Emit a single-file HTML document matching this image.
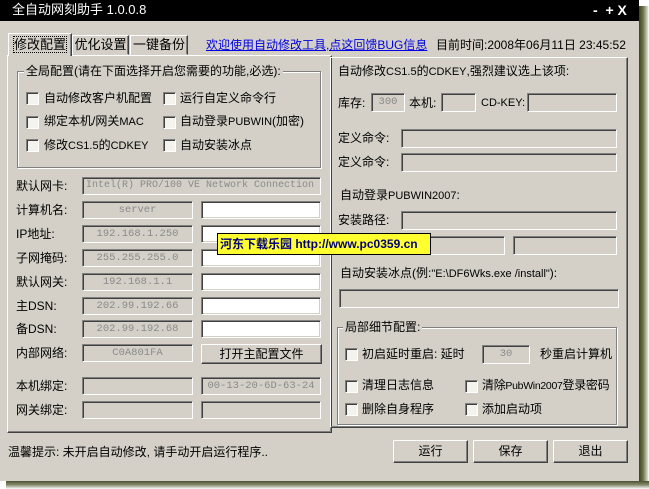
<!DOCTYPE html><html><head><meta charset="utf-8"><style>
*{margin:0;padding:0;box-sizing:border-box}
body{width:649px;height:489px;background:#fff;position:relative;overflow:hidden;font-family:"Liberation Sans","Noto Sans CJK SC",sans-serif;font-size:12px;color:#000}
.a{position:absolute;white-space:nowrap;line-height:16px}
.win{position:absolute;left:0;top:0;width:639px;height:481px;background:#d4d0c8}
.shr{position:absolute;left:639px;top:6px;width:10px;height:483px;background:linear-gradient(90deg,#3c4420,#6c7248 40%,#c8c8b8 80%,#fff)}
.shb{position:absolute;left:6px;top:481px;width:643px;height:8px;background:linear-gradient(180deg,#4c5230,#8a8e70 50%,#fff)}
.tb{position:absolute;left:0;top:0;width:639px;height:21px;background:#000;color:#fff}
.f{position:absolute;overflow:hidden;white-space:nowrap;border-top:1px solid #808080;border-left:1px solid #808080;border-right:1px solid #fff;border-bottom:1px solid #fff;box-shadow:inset 1px 1px 0 #404040,inset -1px -1px 0 #d4d0c8;background:#d4d0c8;color:#8a8a8a;text-align:center;line-height:16px;font-family:"Liberation Mono","Noto Sans CJK SC",monospace;font-size:10.5px}
.w{background:#fff}
.cb{position:absolute;width:13px;height:13px;border-top:1px solid #808080;border-left:1px solid #808080;border-right:1px solid #fff;border-bottom:1px solid #fff;box-shadow:inset 1px 1px 0 #404040;background:#f4f3ee}
.g{position:absolute;border:1px solid #808080;box-shadow:1px 1px 0 #fff,inset 1px 1px 0 #fff}
.btn{position:absolute;border:1px solid;border-color:#fff #404040 #404040 #fff;box-shadow:inset -1px -1px 0 #808080;text-align:center;background:#d4d0c8}
.lg{background:#d4d0c8;padding:0 2px}
.tab{position:absolute;border:1px solid;border-color:#fff #404040 transparent #fff;box-shadow:inset -1px 0 0 #808080;text-align:center;line-height:18px;font-size:13px}
.n{font-size:11px}
</style></head><body>
<div class="shr"></div><div class="shb"></div>
<div class="win"></div>
<div class="tb"><div class="a" style="left:12px;top:2px;font-size:13px">全自动网刻助手 1.0.0.8</div>
<div class="a" style="left:593px;top:2px;font-weight:bold;font-size:14px">-&nbsp; + X</div></div>

<div class="tab" style="left:72px;top:35px;width:57px;height:20px">优化设置</div>
<div class="tab" style="left:130px;top:35px;width:58px;height:20px">一键备份</div>
<div class="tab" style="left:8px;top:33px;width:64px;height:23px;background:#d4d0c8;z-index:2;border-bottom:none;line-height:21px"><span style="outline:1px dotted #000">修改配置</span></div>
<div class="a" style="left:206px;top:37px;color:#0000e0;text-decoration:underline">欢迎使用自动修改工具,点这回馈BUG信息</div>
<div class="a" style="left:436px;top:37px">目前时间:2008年06月11日 23:45:52</div>

<div class="g" style="left:7px;top:55px;width:325px;height:378px;border-color:#fff #404040 #404040 #fff;box-shadow:inset -1px -1px 0 #808080"></div>
<div class="g" style="left:17px;top:71px;width:304px;height:97px"></div>
<div class="a lg" style="left:24px;top:63px">全局配置(请在下面选择开启您需要的功能,必选):</div>
<div class="cb" style="left:26px;top:92px"></div><div class="a" style="left:44px;top:90px">自动修改客户机配置</div>
<div class="cb" style="left:163px;top:92px"></div><div class="a" style="left:180px;top:90px">运行自定义命令行</div>
<div class="cb" style="left:26px;top:116px"></div><div class="a" style="left:44px;top:113px">绑定本机/网关<span class="n">MAC</span></div>
<div class="cb" style="left:163px;top:116px"></div><div class="a" style="left:180px;top:113px">自动登录<span class="n">PUBWIN</span>(加密)</div>
<div class="cb" style="left:26px;top:139px"></div><div class="a" style="left:44px;top:137px">修改<span class="n">CS1.5</span>的<span class="n">CDKEY</span></div>
<div class="cb" style="left:163px;top:139px"></div><div class="a" style="left:180px;top:137px">自动安装冰点</div>

<div class="a" style="left:16px;top:178px">默认网卡:</div><div class="f" style="left:82px;top:177px;width:239px;height:18px;text-align:left;padding-left:3px;font-size:10px">Intel(R) PRO/100 VE Network Connection</div>
<div class="a" style="left:16px;top:202px">计算机名:</div><div class="f" style="left:82px;top:201px;width:111px;height:18px">server</div><div class="f w" style="left:201px;top:201px;width:120px;height:18px"></div>
<div class="a" style="left:16px;top:226px">IP地址:</div><div class="f" style="left:82px;top:225px;width:111px;height:18px">192.168.1.250</div><div class="f w" style="left:201px;top:225px;width:120px;height:18px"></div>
<div class="a" style="left:16px;top:250px">子网掩码:</div><div class="f" style="left:82px;top:249px;width:111px;height:18px">255.255.255.0</div><div class="f w" style="left:201px;top:249px;width:120px;height:18px"></div>
<div class="a" style="left:16px;top:274px">默认网关:</div><div class="f" style="left:82px;top:273px;width:111px;height:18px">192.168.1.1</div><div class="f w" style="left:201px;top:273px;width:120px;height:18px"></div>
<div class="a" style="left:16px;top:298px">主DSN:</div><div class="f" style="left:82px;top:297px;width:111px;height:18px">202.99.192.66</div><div class="f w" style="left:201px;top:297px;width:120px;height:18px"></div>
<div class="a" style="left:16px;top:321px">备DSN:</div><div class="f" style="left:82px;top:320px;width:111px;height:18px">202.99.192.68</div><div class="f w" style="left:201px;top:320px;width:120px;height:18px"></div>
<div class="a" style="left:16px;top:345px">内部网络:</div><div class="f" style="left:82px;top:344px;width:111px;height:18px">C0A801FA</div>
<div class="btn" style="left:201px;top:344px;width:121px;height:20px;line-height:18px">打开主配置文件</div>
<div class="a" style="left:16px;top:378px">本机绑定:</div><div class="f" style="left:82px;top:377px;width:111px;height:18px"></div><div class="f" style="left:201px;top:377px;width:120px;height:18px">00-13-20-6D-63-24</div>
<div class="a" style="left:16px;top:402px">网关绑定:</div><div class="f" style="left:82px;top:401px;width:111px;height:18px"></div><div class="f" style="left:201px;top:401px;width:120px;height:18px"></div>

<div class="g" style="left:330px;top:57px;width:298px;height:371px;border-color:#fff #404040 #404040 #fff;box-shadow:inset -1px -1px 0 #808080"></div>
<div class="a" style="left:338px;top:63px">自动修改<span class="n">CS1.5</span>的<span class="n">CDKEY</span>,强烈建议选上该项:</div>
<div class="a" style="left:338px;top:95px">库存:</div><div class="f" style="left:371px;top:93px;width:34px;height:19px">300</div>
<div class="a" style="left:409px;top:95px">本机:</div><div class="f" style="left:441px;top:93px;width:35px;height:19px"></div>
<div class="a n" style="left:481px;top:95px">CD-KEY:</div><div class="f" style="left:527px;top:93px;width:90px;height:19px"></div>
<div class="a" style="left:338px;top:130px">定义命令:</div><div class="f" style="left:401px;top:129px;width:216px;height:19px"></div>
<div class="a" style="left:338px;top:154px">定义命令:</div><div class="f" style="left:401px;top:153px;width:216px;height:19px"></div>
<div class="a" style="left:340px;top:187px">自动登录<span class="n">PUBWIN2007</span>:</div>
<div class="a" style="left:338px;top:212px">安装路径:</div><div class="f" style="left:401px;top:211px;width:216px;height:19px"></div>
<div class="f" style="left:401px;top:236px;width:104px;height:19px"></div><div class="f" style="left:513px;top:236px;width:104px;height:19px"></div>
<div class="a" style="left:340px;top:265px">自动安装冰点(例:<span class="n">"E:\DF6Wks.exe /install"</span>):</div>
<div class="f" style="left:339px;top:289px;width:280px;height:19px"></div>

<div class="g" style="left:337px;top:327px;width:280px;height:98px"></div>
<div class="a lg" style="left:343px;top:319px">局部细节配置:</div>
<div class="cb" style="left:345px;top:348px"></div><div class="a" style="left:362px;top:346px">初启延时重启: 延时</div>
<div class="f" style="left:482px;top:345px;width:48px;height:19px">30</div>
<div class="a" style="left:540px;top:346px">秒重启计算机</div>
<div class="cb" style="left:345px;top:380px"></div><div class="a" style="left:362px;top:377px">清理日志信息</div>
<div class="cb" style="left:465px;top:380px"></div><div class="a" style="left:482px;top:377px;letter-spacing:-0.3px">清除<span style="font-size:10.5px">PubWin2007</span>登录密码</div>
<div class="cb" style="left:345px;top:403px"></div><div class="a" style="left:362px;top:401px">删除自身程序</div>
<div class="cb" style="left:465px;top:403px"></div><div class="a" style="left:482px;top:401px">添加启动项</div>

<div class="a" style="left:8px;top:444px">温馨提示: 未开启自动修改, 请手动开启运行程序..</div>
<div class="btn" style="left:393px;top:440px;width:75px;height:23px;line-height:21px">运行</div>
<div class="btn" style="left:473px;top:440px;width:75px;height:23px;line-height:21px">保存</div>
<div class="btn" style="left:553px;top:440px;width:75px;height:23px;line-height:21px">退出</div>

<div class="a" style="left:217px;top:233px;width:214px;height:22px;background:#ffff30;border:1px solid #000;color:#000080;font-weight:bold;font-size:12px;line-height:20px;padding-left:2px">河东下载乐园 http://www.pc0359.cn</div>
</body></html>
